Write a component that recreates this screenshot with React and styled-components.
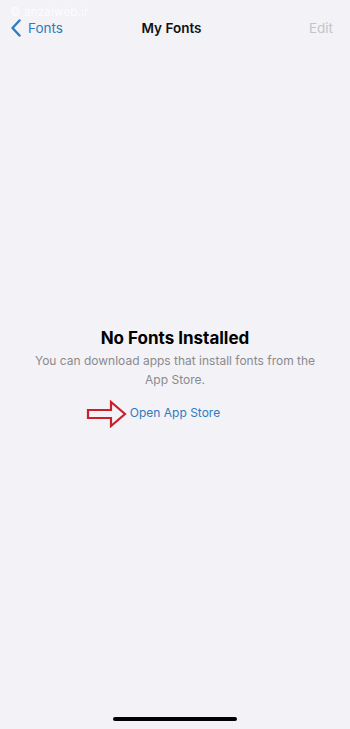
import React from "react";
import styled, { createGlobalStyle } from "styled-components";

const Global = createGlobalStyle`
  html, body { margin: 0; padding: 0; background: #f2f2f7; }
  body { font-family: Inter, "Noto Sans", sans-serif; -webkit-font-smoothing: antialiased; }
  * { box-sizing: border-box; }
`;

const Screen = styled.div`
  position: relative;
  width: 350px;
  height: 729px;
  background: #f2f2f7;
  display: flex;
  flex-direction: column;
  overflow: hidden;
`;

const Watermark = styled.div`
  position: absolute;
  left: 10px;
  top: 5px;
  font-size: 11.5px;
  line-height: 14px;
  color: rgba(255, 255, 255, 0.85);
  letter-spacing: 0.2px;
`;

const NavBar = styled.div`
  height: 56px;
  display: grid;
  grid-template-columns: 1fr auto 1fr;
  align-items: center;
  padding: 0 17px 0 10px;
`;

const BackButton = styled.div`
  display: flex;
  align-items: center;
  gap: 6px;
  color: #2f7bbd;
  font-size: 13.5px;
`;

const Title = styled.div`
  font-size: 13.5px;
  font-weight: 600;
  color: #111;
`;

const EditButton = styled.div`
  justify-self: end;
  font-size: 13.5px;
  color: #c4c4c8;
`;

const Content = styled.div`
  flex: 1;
  display: flex;
  flex-direction: column;
  align-items: center;
  padding-top: 272px;
  text-align: center;
`;

const Heading = styled.div`
  font-size: 17px;
  font-weight: 700;
  color: #000;
  line-height: 20px;
`;

const Message = styled.div`
  margin-top: 3px;
  font-size: 12px;
  line-height: 19px;
  color: #8a8a8e;
  width: 292px;
`;

const LinkWrap = styled.div`
  position: relative;
  margin-top: 16px;
  font-size: 12px;
  color: #2f7bbd;
  line-height: 16px;
`;

const Arrow = styled.svg`
  position: absolute;
  right: calc(100% + 2px);
  top: -5px;
`;

const HomeIndicator = styled.div`
  width: 124px;
  height: 4px;
  border-radius: 3px;
  background: #000;
  align-self: center;
  margin-bottom: 8px;
`;

export default function App() {
  return (
    <>
      <Global />
      <Screen>
        <Watermark>© anzalweb.ir</Watermark>
        <NavBar>
          <BackButton>
            <svg width="12" height="18" viewBox="0 0 12 18">
              <path d="M9.5 1.5 L2.5 9 L9.5 16.5" fill="none" stroke="#2f7bbd" strokeWidth="2.4" strokeLinecap="round" strokeLinejoin="round" />
            </svg>
            Fonts
          </BackButton>
          <Title>My Fonts</Title>
          <EditButton>Edit</EditButton>
        </NavBar>
        <Content>
          <Heading>No Fonts Installed</Heading>
          <Message>You can download apps that install fonts from the App Store.</Message>
          <LinkWrap>
            <Arrow width="42" height="28" viewBox="0 0 42 28">
              <polygon points="2,10 25,10 25,2 39,14 25,26 25,18 2,18" fill="none" stroke="#cc1f2d" strokeWidth="2.2" strokeLinejoin="miter" />
            </Arrow>
            Open App Store
          </LinkWrap>
        </Content>
        <HomeIndicator />
      </Screen>
    </>
  );
}
